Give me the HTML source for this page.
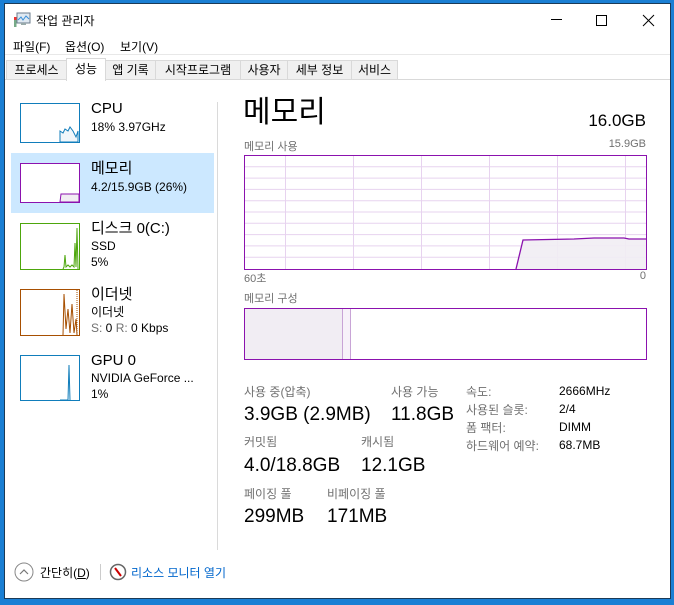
<!DOCTYPE html>
<html><head><meta charset="utf-8"><style>
*{margin:0;padding:0;box-sizing:border-box}
body{width:674px;height:605px;background:#1a7fd4;position:relative;overflow:hidden;font-family:"Liberation Sans","Noto Sans CJK KR",sans-serif;color:#000}
.win{position:absolute;left:4px;top:3px;width:667px;height:596px;background:#fff;border:1px solid #1b3a57}
.a{position:absolute;white-space:nowrap}
.tab{position:absolute;top:60px;height:20px;border:1px solid #d9d9d9;background:#f0f0f0;font-size:12px;line-height:18px;text-align:center;color:#000}
.thumb{position:absolute;left:20px;width:60px;background:#fff}
.t1{font-size:15px;line-height:18px}
.t2{font-size:12px;line-height:16px}
.lab{font-size:12px;color:#707070}
.val{font-size:19px}
</style></head><body>
<div class="win"></div>
<svg class="a" style="left:13px;top:12px" width="18" height="16" viewBox="0 0 18 16"><rect x="4" y="1" width="13" height="10" fill="#dfe9f2" stroke="#6b7c8c"/><polyline points="5,8 8,5 10,8 13,4 16,7" fill="none" stroke="#3a8fd8"/><rect x="8" y="11" width="5" height="2" fill="#9aa"/><rect x="1" y="5" width="2.5" height="10" fill="#7a8"/><rect x="1" y="5" width="2.5" height="3" fill="#e33"/></svg>
<div class="a" style="left:36px;top:12px;font-size:12px">작업 관리자</div>
<div class="a" style="left:551px;top:19px;width:11px;height:1px;background:#000"></div>
<div class="a" style="left:596px;top:15px;width:11px;height:11px;border:1px solid #000"></div>
<svg class="a" style="left:642px;top:14px" width="13" height="13"><path d="M1 1L12 12M12 1L1 12" stroke="#000" stroke-width="1"/></svg>
<div class="a" style="left:13px;top:38px;font-size:12px">파일(F)</div>
<div class="a" style="left:65px;top:38px;font-size:12px">옵션(O)</div>
<div class="a" style="left:120px;top:38px;font-size:12px">보기(V)</div>
<div class="a" style="left:5px;top:54px;width:665px;height:1px;background:#e8e8e8"></div>
<div class="a" style="left:5px;top:79px;width:665px;height:1px;background:#d9d9d9"></div>
<div class="tab" style="left:6px;width:61px">프로세스</div>
<div class="tab" style="left:66px;width:40px;top:58px;height:23px;background:#fff;border-bottom:none;line-height:20px">성능</div>
<div class="tab" style="left:105px;width:51px">앱 기록</div>
<div class="tab" style="left:155px;width:86px">시작프로그램</div>
<div class="tab" style="left:240px;width:48px">사용자</div>
<div class="tab" style="left:287px;width:65px">세부 정보</div>
<div class="tab" style="left:351px;width:47px">서비스</div>
<div class="a" style="left:11px;top:153px;width:203px;height:60px;background:#cce8ff"></div>
<div class="a" style="left:217px;top:102px;width:1px;height:448px;background:#dadada"></div>

<svg class="thumb" style="top:103px" width="60" height="40"><rect x="0.5" y="0.5" width="59" height="39" fill="#fff" stroke="#117dbb"/><path d="M40 39 L40 28 L43 30 L45 26 L48 28 L50 24 L53 28 L56 34 L58 28 L58 39Z" fill="#f1f6fa" stroke="#117dbb"/></svg>
<div class="a t1" style="left:91px;top:100px">CPU</div>
<div class="a t2" style="left:91px;top:119px">18% 3.97GHz</div>

<svg class="thumb" style="top:163px" width="60" height="40"><rect x="0.5" y="0.5" width="59" height="39" fill="#fff" stroke="#8b12ae"/><path d="M40 39 L41 31 L59 31 L59 39Z" fill="#f1edf3" stroke="#8b12ae"/></svg>
<div class="a t1" style="left:91px;top:160px">메모리</div>
<div class="a t2" style="left:91px;top:179px">4.2/15.9GB (26%)</div>

<svg class="thumb" style="top:223px" width="60" height="47"><rect x="0.5" y="0.5" width="59" height="46" fill="#fff" stroke="#4da60c"/><path d="M43 46 L44 44 L45 32 L46 44 L48 42 L50 44 L52 42 L54 44 L55 20 L56 44 L57 5 L58 46" fill="none" stroke="#4da60c"/></svg>
<div class="a t1" style="left:91px;top:220px">디스크 0(C:)</div>
<div class="a t2" style="left:91px;top:238px">SSD</div>
<div class="a t2" style="left:91px;top:254px">5%</div>

<svg class="thumb" style="top:289px" width="60" height="47"><rect x="0.5" y="0.5" width="59" height="46" fill="#fff" stroke="#a74f01"/><path d="M43 46 L44 5 L46 40 L48 20 L50 44 L52 15 L54 44 L56 30 L57 46" fill="none" stroke="#a74f01"/><line x1="57" y1="1" x2="57" y2="46" stroke="#a74f01" stroke-dasharray="1,1"/></svg>
<div class="a t1" style="left:91px;top:286px">이더넷</div>
<div class="a t2" style="left:91px;top:304px">이더넷</div>
<div class="a t2" style="left:91px;top:320px"><span style="color:#707070">S:</span> 0 <span style="color:#707070">R:</span> 0 Kbps</div>

<svg class="thumb" style="top:355px" width="60" height="46"><rect x="0.5" y="0.5" width="59" height="45" fill="#fff" stroke="#117dbb"/><path d="M40 45 L48 45 L49 10 L50 45" fill="none" stroke="#117dbb"/></svg>
<div class="a t1" style="left:91px;top:352px">GPU 0</div>
<div class="a t2" style="left:91px;top:370px">NVIDIA GeForce ...</div>
<div class="a t2" style="left:91px;top:386px">1%</div>

<div class="a" style="left:243px;top:95px;font-size:30px;line-height:36px">메모리</div>
<div class="a" style="right:28px;top:111px;font-size:17px">16.0GB</div>
<div class="a lab" style="left:244px;top:138px;font-size:11px">메모리 사용</div>
<div class="a lab" style="right:28px;top:138px;font-size:11px">15.9GB</div>
<svg class="a" style="left:244px;top:155px" width="403" height="115">
<g stroke="#e7d3ef" stroke-width="1">
<line x1="0" y1="11.8" x2="403" y2="11.8"/><line x1="0" y1="23.1" x2="403" y2="23.1"/><line x1="0" y1="34.4" x2="403" y2="34.4"/><line x1="0" y1="45.7" x2="403" y2="45.7"/><line x1="0" y1="57" x2="403" y2="57"/><line x1="0" y1="68.3" x2="403" y2="68.3"/><line x1="0" y1="79.6" x2="403" y2="79.6"/><line x1="0" y1="90.9" x2="403" y2="90.9"/><line x1="0" y1="102.2" x2="403" y2="102.2"/>
<line x1="41.5" y1="0" x2="41.5" y2="115"/><line x1="109.5" y1="0" x2="109.5" y2="115"/><line x1="177.5" y1="0" x2="177.5" y2="115"/><line x1="245.5" y1="0" x2="245.5" y2="115"/><line x1="313.5" y1="0" x2="313.5" y2="115"/><line x1="381.5" y1="0" x2="381.5" y2="115"/></g>
<path d="M272 114 L279 85 L330 84 L350 83 L380 83 L385 84 L402 84 L402 114Z" fill="#f1edf3" fill-opacity="0.9" stroke="none"/>
<path d="M272 114 L279 85 L330 84 L350 83 L380 83 L385 84 L402 84" fill="none" stroke="#8b12ae" stroke-width="1.3"/>
<rect x="0.5" y="0.5" width="402" height="114" fill="none" stroke="#8b12ae"/>
</svg>
<div class="a lab" style="left:244px;top:270px;font-size:11px">60초</div>
<div class="a lab" style="right:28px;top:270px;font-size:11px">0</div>
<div class="a lab" style="left:244px;top:290px;font-size:11px">메모리 구성</div>
<svg class="a" style="left:244px;top:308px" width="403" height="52">
<rect x="0" y="0" width="98" height="52" fill="#f1edf3"/>
<rect x="98" y="1" width="8" height="50" fill="#f7f2f9"/>
<line x1="98.5" y1="0" x2="98.5" y2="52" stroke="#c8a4d6"/>
<line x1="106.5" y1="0" x2="106.5" y2="52" stroke="#c8a4d6"/>
<rect x="0.5" y="0.5" width="402" height="51" fill="none" stroke="#8b12ae"/>
</svg>

<div class="a lab" style="left:244px;top:383px">사용 중(압축)</div>
<div class="a val" style="left:244px;top:404px">3.9GB (2.9MB)</div>
<div class="a lab" style="left:391px;top:383px">사용 가능</div>
<div class="a val" style="left:391px;top:404px">11.8GB</div>
<div class="a lab" style="left:244px;top:433px">커밋됨</div>
<div class="a val" style="left:244px;top:455px">4.0/18.8GB</div>
<div class="a lab" style="left:361px;top:433px">캐시됨</div>
<div class="a val" style="left:361px;top:455px">12.1GB</div>
<div class="a lab" style="left:244px;top:485px">페이징 풀</div>
<div class="a val" style="left:244px;top:506px">299MB</div>
<div class="a lab" style="left:327px;top:485px">비페이징 풀</div>
<div class="a val" style="left:327px;top:506px">171MB</div>

<div class="a lab" style="left:466px;top:383px">속도:</div>
<div class="a lab" style="left:466px;top:401px">사용된 슬롯:</div>
<div class="a lab" style="left:466px;top:419px">폼 팩터:</div>
<div class="a lab" style="left:466px;top:437px">하드웨어 예약:</div>
<div class="a" style="left:559px;top:384px;font-size:12px">2666MHz</div>
<div class="a" style="left:559px;top:402px;font-size:12px">2/4</div>
<div class="a" style="left:559px;top:420px;font-size:12px">DIMM</div>
<div class="a" style="left:559px;top:438px;font-size:12px">68.7MB</div>

<svg class="a" style="left:14px;top:562px" width="20" height="20"><circle cx="10" cy="10" r="9" fill="#fff" stroke="#888"/><path d="M6 12 L10 8 L14 12" fill="none" stroke="#777" stroke-width="1.2"/></svg>
<div class="a" style="left:40px;top:564px;font-size:12px">간단히(<u>D</u>)</div>
<div class="a" style="left:100px;top:564px;width:1px;height:16px;background:#ccc"></div>
<svg class="a" style="left:109px;top:563px" width="18" height="18"><circle cx="9" cy="9" r="7.5" fill="#fff" stroke="#666" stroke-width="1.5"/><path d="M6 5 L12 13" stroke="#c00" stroke-width="2"/></svg>
<div class="a" style="left:131px;top:564px;font-size:12px;color:#0066cc">리소스 모니터 열기</div>
</body></html>
